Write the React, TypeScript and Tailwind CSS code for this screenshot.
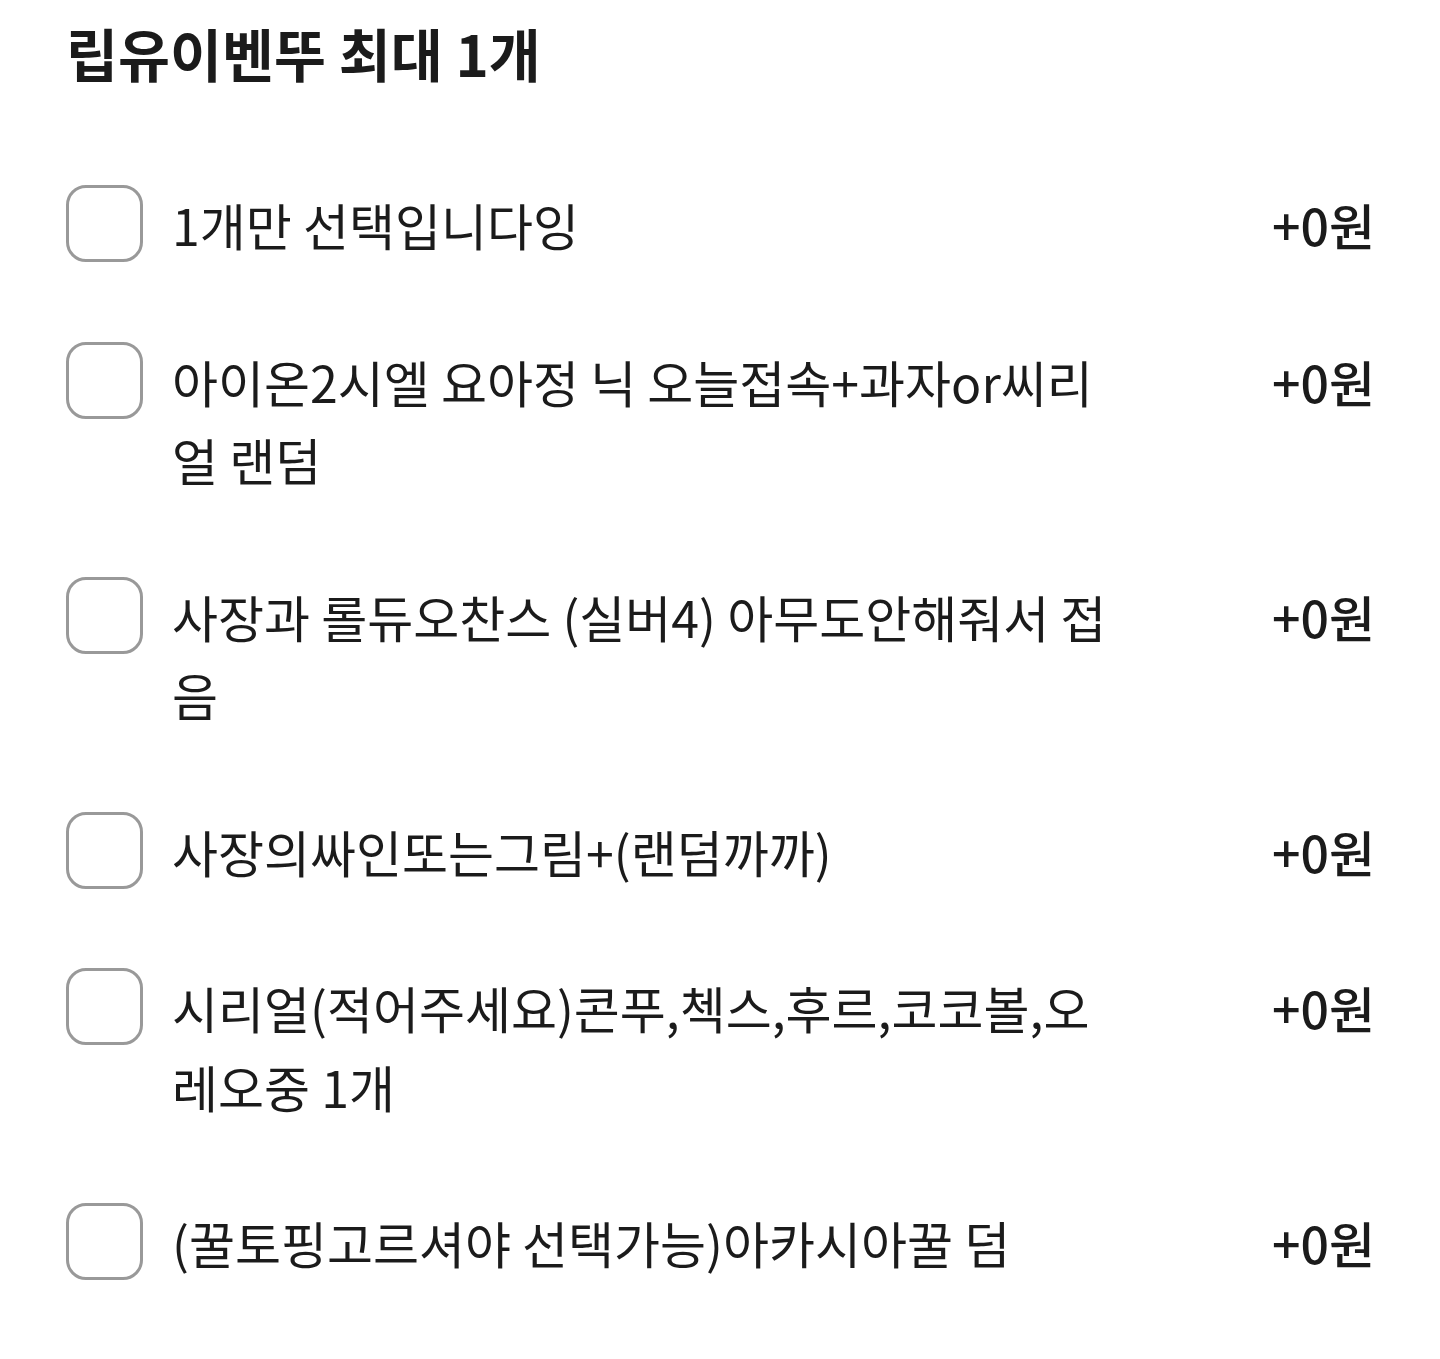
const options = [
  "1개만 선택입니다잉",
  "아이온2시엘 요아정 닉 오늘접속+과자or씨리얼 랜덤",
  "사장과 롤듀오찬스 (실버4) 아무도안해줘서 접음",
  "사장의싸인또는그림+(랜덤까까)",
  "시리얼(적어주세요)콘푸,첵스,후르,코코볼,오레오중 1개",
  "(꿀토핑고르셔야 선택가능)아카시아꿀 덤",
];

export default function App() {
  return (
    <div
      className="min-h-[1359px] bg-white pl-[66px] pr-[65px] pt-[15px] text-[#1b1b1b]"
      style={{ fontFamily: '"Noto Sans CJK KR", "Noto Sans", sans-serif' }}
    >
      <h2 className="text-[56.5px] font-bold leading-[74px]">립유이벤뚜 최대 1개</h2>

      <ul className="mt-[96px] flex flex-col gap-[78px]">
        {options.map((label) => (
          <li key={label} className="flex items-start">
            <span className="h-[77px] w-[77px] shrink-0 rounded-[20px] border-[3px] border-[#999999] bg-white" />
            <p className="ml-[29px] w-[945px] text-[50px] leading-[78.5px]">{label}</p>
            <span className="ml-auto text-[50px] font-medium leading-[78.5px]">+0원</span>
          </li>
        ))}
      </ul>
    </div>
  );
}
